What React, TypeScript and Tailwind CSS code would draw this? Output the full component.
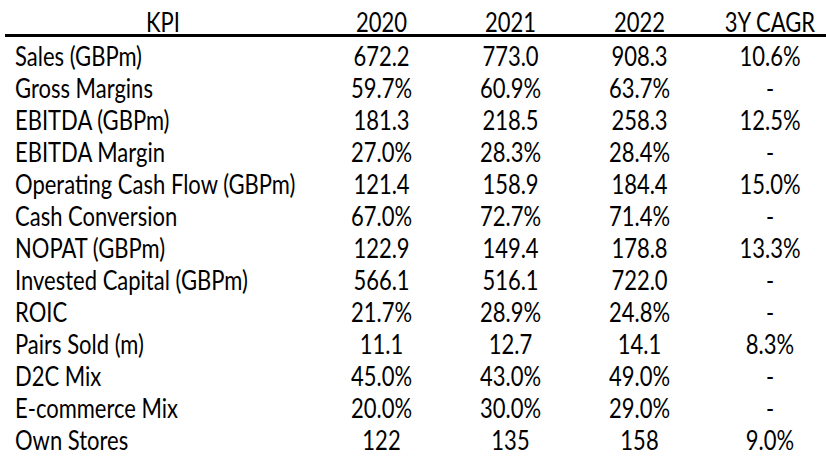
import React from 'react';

const rows: string[][] = [
  ['Sales (GBPm)', '672.2', '773.0', '908.3', '10.6%'],
  ['Gross Margins', '59.7%', '60.9%', '63.7%', '-'],
  ['EBITDA (GBPm)', '181.3', '218.5', '258.3', '12.5%'],
  ['EBITDA Margin', '27.0%', '28.3%', '28.4%', '-'],
  ['Operating Cash Flow (GBPm)', '121.4', '158.9', '184.4', '15.0%'],
  ['Cash Conversion', '67.0%', '72.7%', '71.4%', '-'],
  ['NOPAT (GBPm)', '122.9', '149.4', '178.8', '13.3%'],
  ['Invested Capital (GBPm)', '566.1', '516.1', '722.0', '-'],
  ['ROIC', '21.7%', '28.9%', '24.8%', '-'],
  ['Pairs Sold (m)', '11.1', '12.7', '14.1', '8.3%'],
  ['D2C Mix', '45.0%', '43.0%', '49.0%', '-'],
  ['E-commerce Mix', '20.0%', '30.0%', '29.0%', '-'],
  ['Own Stores', '122', '135', '158', '9.0%'],
];

const grid = 'grid grid-cols-[317px_129px_129px_129px_122px]';

const Txt = ({ children }: { children: React.ReactNode }) => (
  <span className="inline-block scale-y-[1.2]">{children}</span>
);

export default function App() {
  return (
    <div
      className="w-[826px] h-[464px] bg-white text-black overflow-hidden text-[22px] leading-none"
      style={{ fontFamily: 'Lato, "Open Sans", sans-serif' }}
    >
      <div className={`${grid} h-[34px] pt-[10px] items-center`}>
        <div className="text-center pl-[9px]"><Txt>KPI</Txt></div>
        <div className="text-center"><Txt>2020</Txt></div>
        <div className="text-center"><Txt>2021</Txt></div>
        <div className="text-center"><Txt>2022</Txt></div>
        <div className="text-center pl-[10px]"><Txt>3Y CAGR</Txt></div>
      </div>
      <div className="ml-[5px] h-[3px] bg-black" />
      <div className="mt-[3px]">
        {rows.map((r) => (
          <div key={r[0]} className={`${grid} h-[32px] items-center`}>
            <div className="pl-[15px]"><Txt>{r[0]}</Txt></div>
            <div className="text-center"><Txt>{r[1]}</Txt></div>
            <div className="text-center"><Txt>{r[2]}</Txt></div>
            <div className="text-center"><Txt>{r[3]}</Txt></div>
            <div className="text-center pl-[10px]"><Txt>{r[4]}</Txt></div>
          </div>
        ))}
      </div>
    </div>
  );
}
